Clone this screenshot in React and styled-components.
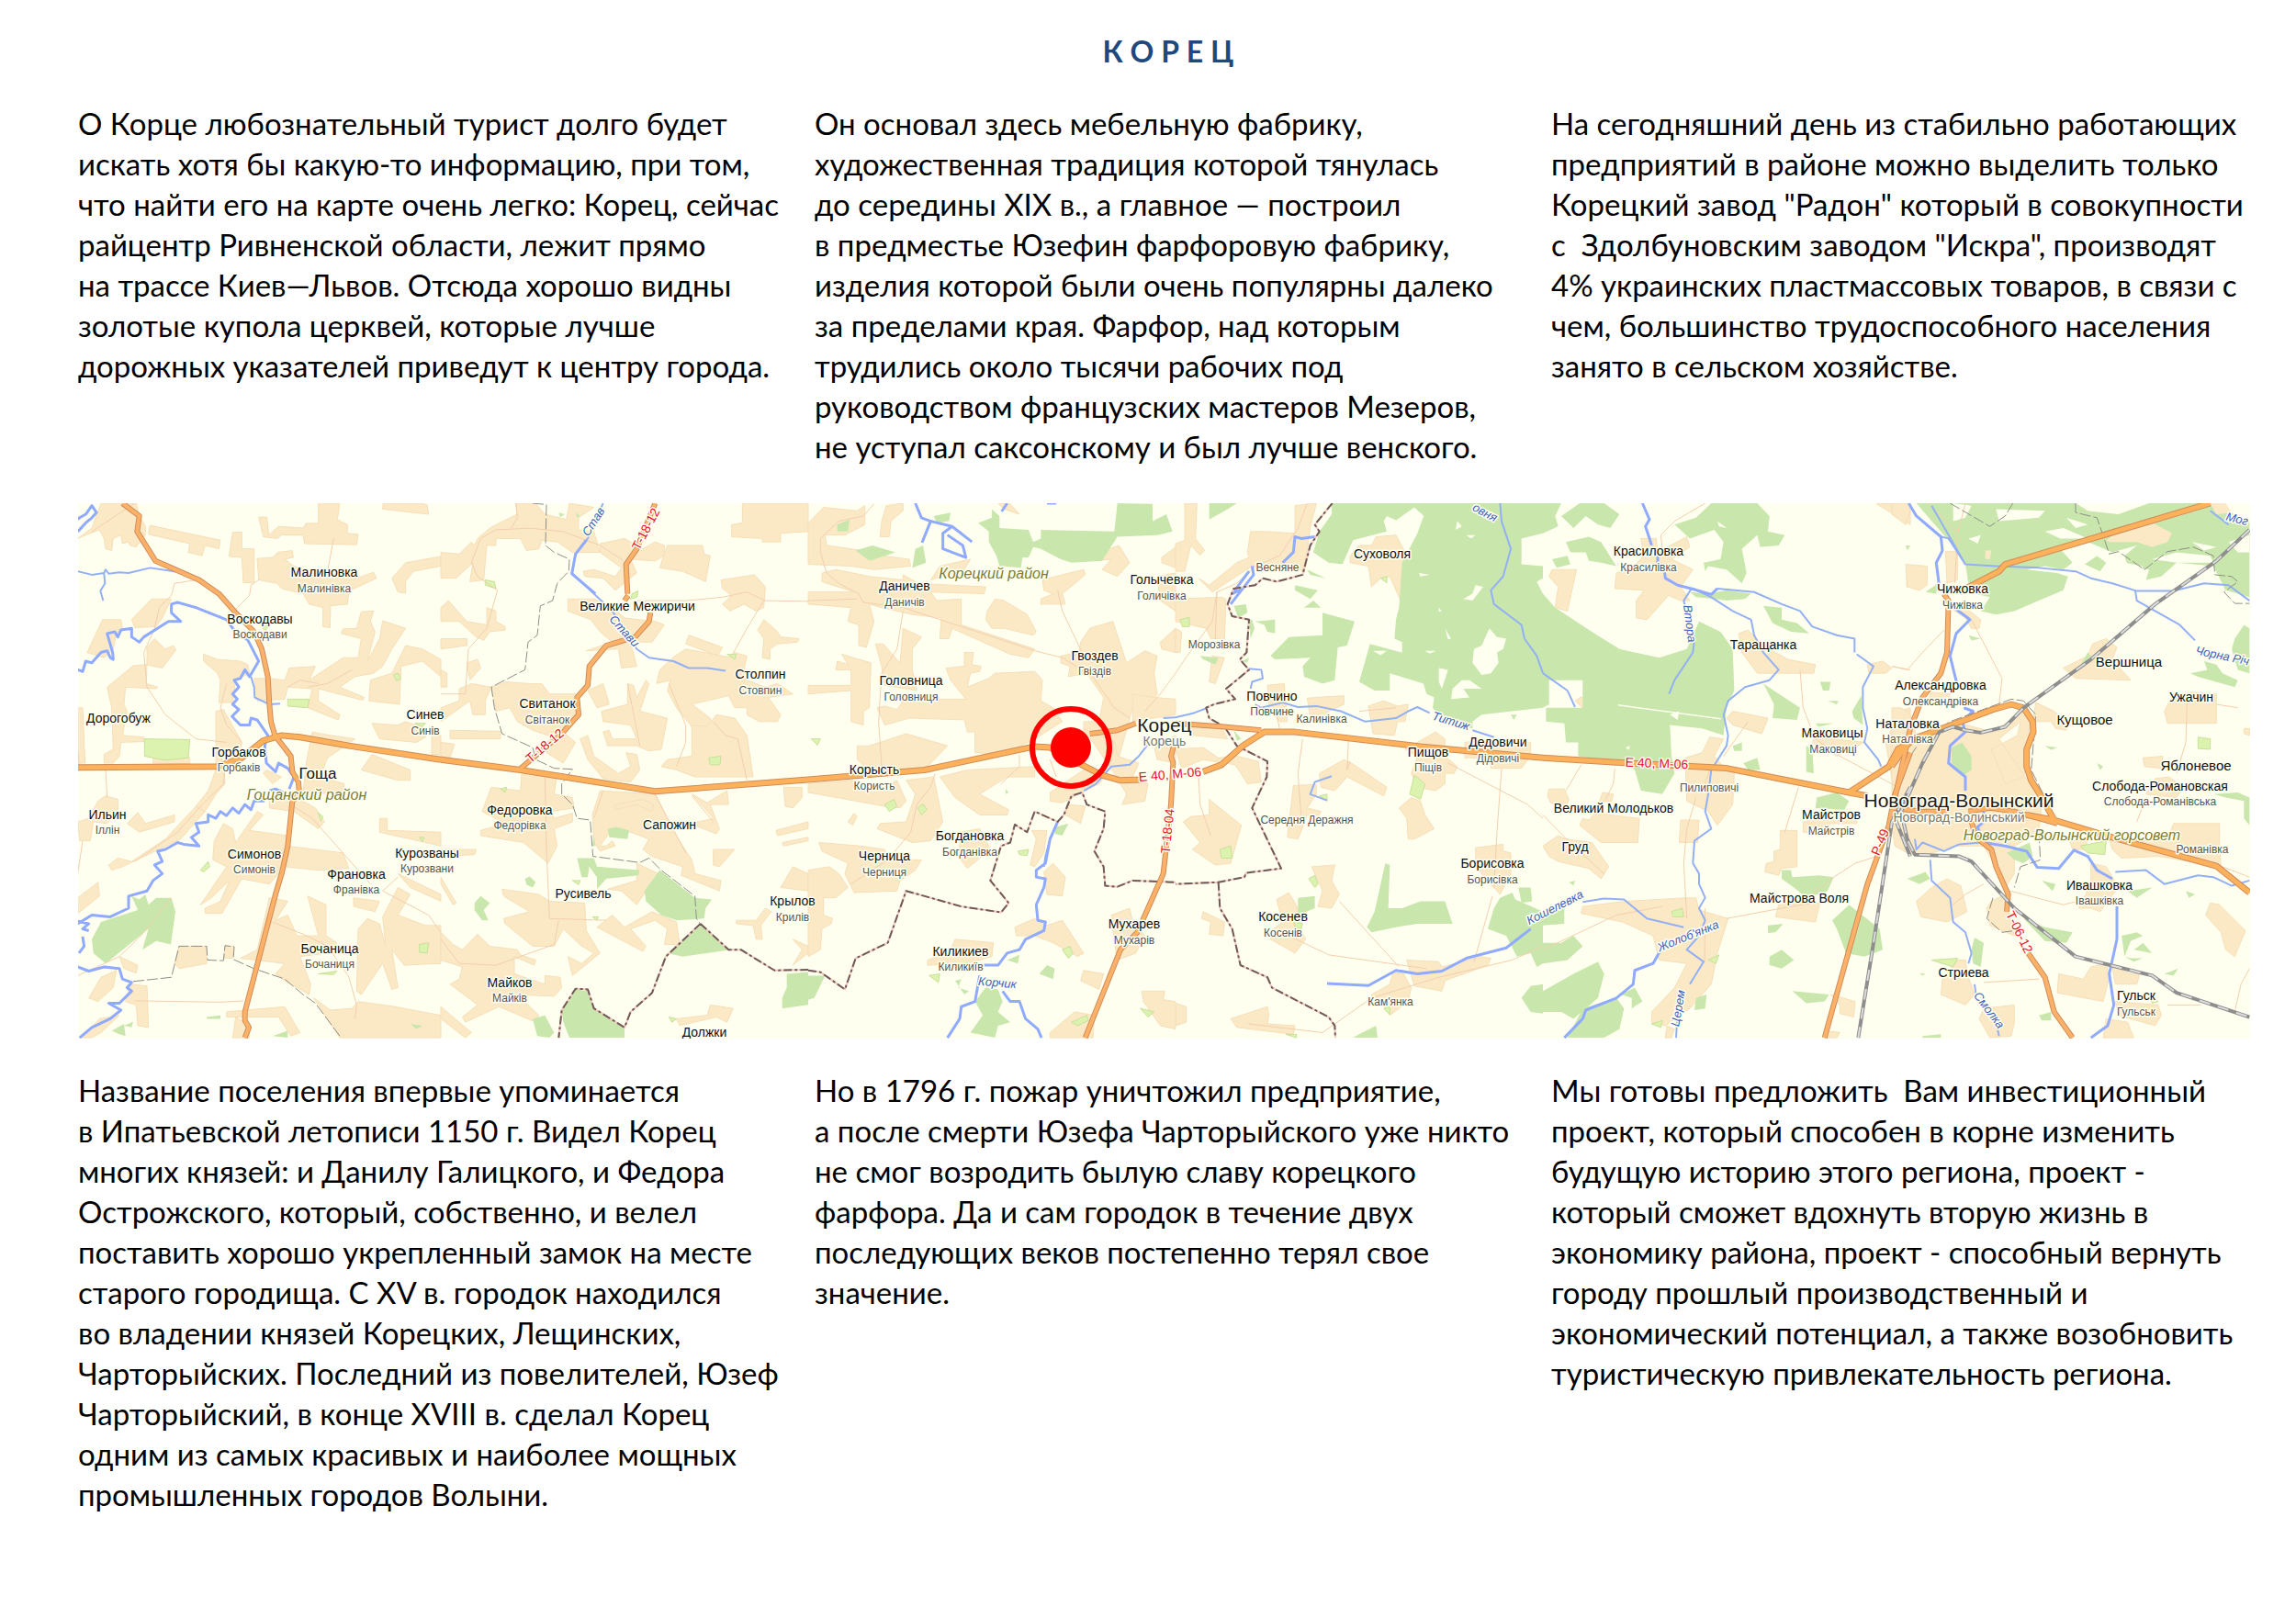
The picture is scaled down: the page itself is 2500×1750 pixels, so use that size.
import React from "react";
import styled, { createGlobalStyle } from "styled-components";

const GlobalStyle = createGlobalStyle`
  body { margin: 0; background: #fff; }
`;

const Page = styled.main`
  box-sizing: border-box;
  padding: 34px 29px 60px 85px;
  font-family: Lato, "Open Sans", sans-serif;
  color: #000;
`;

const Title = styled.h1`
  margin: 0 0 34px;
  padding-right: 12px;
  text-align: center;
  font-size: 32px;
  line-height: 44px;
  font-weight: 700;
  color: #1f497d;
`;

const Columns = styled.section`
  display: grid;
  grid-template-columns: repeat(3, minmax(0, 1fr));
  column-gap: 20px;
`;

const Paragraph = styled.p`
  margin: 0;
  font-size: 33px;
  line-height: 44px;
  white-space: pre-wrap;
`;

const MapFigure = styled.figure`
  margin: 40px 21px 34px 0;
`;

const MapDrawing = styled.svg`
  display: block;
  width: 100%;
  height: auto;
  background: #fffff0;
`;

const Shape = styled.path`
  vector-effect: non-scaling-stroke;
  stroke-linejoin: round;
  fill: ${(p) => p.$fill || "none"};
  stroke: ${(p) => p.$stroke || "none"};
  stroke-width: ${(p) => p.$width || 1}px;
  stroke-dasharray: ${(p) => p.$dash || "none"};
`;

const labelKinds = {
  town: { size: 14, color: "#111" },
  local: { size: 12, color: "#555" },
  place: { size: 17, color: "#111" },
  city: { size: 21, color: "#1c1c1c" },
  village: { size: 15, color: "#111" },
  cityLocal: { size: 14, color: "#777" },
  district: { size: 16, color: "#7d7d35", italic: true },
  river: { size: 13, color: "#3f60bb", italic: true },
  route: { size: 14, color: "#e3142a" },
};

const Label = styled.text`
  font-family: "Liberation Sans", Arial, sans-serif;
  font-size: ${(p) => labelKinds[p.$kind].size}px;
  font-style: ${(p) => (labelKinds[p.$kind].italic ? "italic" : "normal")};
  fill: ${(p) => labelKinds[p.$kind].color};
  stroke: #fffff0;
  stroke-width: 3px;
  stroke-linejoin: round;
  paint-order: stroke;
  text-anchor: middle;
  dominant-baseline: central;
`;

/* The map is stored as six sheets laid side by side, each in its own units. */
const sheets = [
  {
    x: 80,
    fields:
      "M14,110 60,80 90,8 205,8 215,45 235,75 235,100 205,135 185,130 180,120 160,125 155,100 130,110 125,145 105,140 100,110 85,85 40,100z M250,72 480,115 475,140 430,130 420,160 375,150 380,125 245,98z M520,92 550,92 550,140 590,140 590,238 555,238 550,165 508,162z M605,48 632,48 638,100 670,75 750,80 760,66 800,66 800,8 870,8 862,55 895,70 895,95 930,98 925,128 755,125 750,100 680,100 665,110 620,105z M1012,8 1130,8 1155,12 1160,40 1010,25z M600,168 650,165 668,150 715,145 718,165 690,170 720,190 780,205 925,225 980,208 990,225 900,262 895,300 840,305 838,368 815,365 815,310 770,300 750,270 680,255 665,240 605,230z M1040,225 1085,180 1200,162 1200,190 1110,205 1085,235 1085,268 1060,265z M95,345 155,345 160,370 140,385 130,430 100,455 45,440z M190,345 255,285 320,285 290,340 270,365 200,368z M240,425 265,400 300,430 325,420 335,432 290,485 240,475z M425,445 470,460 545,465 570,475 575,500 530,520 520,585 475,585 480,520 470,500 425,465z M110,540 145,515 195,478 240,475 238,530 275,540 270,545 170,540 165,590 175,610 160,680 230,685 230,698 155,700 150,740 130,760 100,760 100,735 130,720 125,600z M14,600 30,600 38,760 14,760z M260,740 350,735 380,745 380,762 260,760z",
    fields2:
      "M590,515 640,515 690,520 705,485 790,480 770,520 880,455 930,455 940,400 875,385 880,372 925,370 940,322 980,320 970,350 985,380 960,465 1000,400 1010,348 1085,370 1040,430 1010,480 980,500 920,510 870,540 950,570 945,578 800,545 800,580 870,620 865,635 765,600 780,545 700,540 690,575 600,580z M970,520 1040,500 1085,420 1140,430 1200,460 1200,510 1140,465 1070,480 1065,590 965,580z M975,645 1060,650 1085,640 1150,660 1150,685 1120,700 1000,690z M465,610 490,605 550,700 545,720 480,740 490,760 495,820 465,850 430,900 400,885 440,840 465,780z M780,670 840,680 920,690 830,745 805,800 885,820 880,845 750,850 760,760z M975,735 1100,780 1100,810 1060,810 940,780z M1170,680 1200,680 1200,735 1170,735z M80,870 105,855 145,865 145,895 110,935 65,930 55,985 20,985 14,930 50,920z M175,935 210,903 235,935 330,910 330,930 215,960z M145,1035 190,1045 300,980 400,885 430,900 350,980 160,1060 125,1070 115,1055z M460,985 490,935 520,950 530,990 600,900 620,910 575,955 700,970 700,1000 880,1020 900,1065 800,1070 690,1060 640,1110 550,1095 485,1195 430,1195 430,1180 480,1160 510,1100 450,1150 415,1170 500,1060 455,1040z M600,1300 640,1150 700,1160 660,1215 700,1200 730,1260 800,1260 765,1145 825,1170 825,1260 860,1280 830,1310 740,1320 775,1400 770,1430 690,1390 660,1370 690,1340 545,1325z M630,780 680,800 650,820 620,790z M640,860 710,850 790,890 820,930 800,950 720,900 640,890z M1000,920 1025,920 1025,955 1200,960 1200,1000 1000,960z M1060,1080 1200,1140 1200,1160 1100,1120z M915,1150 1000,1160 985,1190 915,1175z M1010,1205 1060,1120 1100,1140 1060,1200 1150,1230 1200,1230 1200,1340 1080,1345 1040,1300 1060,1410 1040,1415 1010,1340 940,1430 925,1420 930,1240 960,1210 1000,1225 1020,1290z M345,1290 435,1290 435,1340 345,1355 330,1340z M495,1290 525,1290 520,1325 490,1325z M185,1400 240,1405 245,1525 210,1520 205,1460 170,1450z M150,1320 210,1345 205,1368 165,1355z M50,1440 90,1380 140,1360 130,1410 80,1450z M500,1480 690,1465 740,1540 710,1550 670,1495 500,1495z M785,1440 840,1475 910,1470 930,1450 1050,1465 1200,1490 1200,1555 870,1555z M14,1150 80,1105 85,1145 14,1195z M25,1555 85,1500 150,1490 90,1540 60,1555z M530,1495 575,1520 575,1555 520,1555z",
    woods:
      "M190,1145 215,1155 235,1140 245,1170 270,1150 320,1150 333,1190 318,1285 270,1275 225,1300 245,1240 105,1340 65,1310 60,1270 90,1220 210,1185z M125,1535 165,1515 170,1550 150,1545z M165,1520 195,1508 190,1525z M435,1495 480,1490 480,1500 435,1500z M1100,1515 1140,1520 1120,1530z M650,1550 700,1535 700,1555z",
    meadows:
      "M232,690 380,692 375,745 300,752 232,740z M700,575 770,575 765,600 700,595z M1045,505 1060,500 1070,515 1055,522z M415,1070 440,1045 445,1060 425,1075z M1130,1285 1160,1280 1155,1310 1130,1308z M800,905 815,915 808,928z M800,1370 860,1362 850,1372z M615,365 640,360 625,378z M1115,645 1150,645 1140,655z M1130,975 1145,975 1140,988z",
    lanes:
      "M400,230 330,240 320,275 280,310 265,370 230,440 240,540 300,620 400,690 500,700 M480,600 500,650 550,700 M530,315 575,275 580,245 605,230 M850,110 830,205 M20,770 14,720 M105,780 110,860 M320,1150 220,1260 150,1320 14,1375 M60,90 200,8 M30,985 14,1080 M495,770 490,820 410,890 340,960 200,1045 M710,880 780,920 970,1110 M650,1220 750,1255 830,1290 900,1380 925,1460 920,1500 M200,1448 480,1452 555,1448 M1060,1090 1010,1130 1160,1200 1200,1250 M765,540 830,530 910,490 M700,540 740,520 800,530 M500,530 480,600",
    streams:
      "M14,205 60,215 100,210 105,200 115,212 150,208 180,210 250,195 330,205 400,225 M100,212 103,240 88,262 97,290 M580,510 590,540 592,570 640,590 675,588",
    rivers:
      "M14,90 40,65 60,50 75,35 60,15 40,40 20,50 14,55 M14,490 30,495 40,465 60,470 90,440 110,435 120,455 130,460 128,440 110,385 135,380 145,395 155,375 190,370 190,395 215,410 230,395 310,350 350,350 320,325 320,300 340,295 400,310 500,345 520,370 570,405 605,465 575,510 560,490 545,515 525,520 540,540 520,560 535,575 520,590 540,605 518,625 545,650 575,650 580,630 600,635 635,680 625,710 630,760 660,785 670,760 700,775 720,800 705,835 M640,840 660,835 700,850 M625,870 590,870 580,895 560,880 540,905 520,890 500,912 480,900 465,920 440,910 440,930 400,935 410,960 385,975 410,1000 360,995 340,990 300,1010 275,1015 290,1045 265,1055 290,1080 260,1100 240,1130 180,1145 180,1180 120,1205 60,1200 14,1225 M14,1218 50,1225 30,1240 50,1245 M30,1262 35,1290 18,1310 M14,1350 50,1362 100,1350 150,1355 160,1385 190,1395 175,1410 190,1420 150,1455 115,1455 155,1475 120,1500 60,1525 20,1555",
    roads: [
      "M160,8 215,45 208,90 268,175 410,230 475,270 530,325 590,380 615,430 635,510 640,590 645,640 658,680 710,740 715,785 735,815 738,850 715,870 700,1000 680,1080 660,1140 610,1310 560,1480 560,1505 573,1525 560,1555",
    ],
    highways: ["M14,773 470,770 550,745 620,695 680,680 740,685 900,710 1200,750"],
    borders: "M195,1392 320,1380 345,1290 435,1290 438,1330 490,1332 495,1288 525,1292 522,1328 590,1355 690,1385 750,1430 790,1455 870,1550",
  },
  {
    x: 480,
    fields:
      "M0,150 60,155 100,120 110,130 120,110 160,80 185,68 250,40 245,8 310,8 340,40 410,55 420,8 500,20 450,50 450,85 500,90 520,150 430,150 380,120 330,115 320,140 280,145 260,110 180,110 180,130 150,130 140,230 95,235 105,180 50,225 0,225z M465,205 500,200 570,220 590,195 520,150 520,125 600,110 660,140 700,120 730,130 730,160 700,175 620,170 640,210 570,260 530,225 470,220z M740,130 775,130 855,130 860,155 880,160 865,235 790,205 715,195z M950,70 985,65 985,8 1200,8 1200,90 1110,95 1110,120 1050,120 1050,110 950,105z M915,230 1025,215 1060,250 1055,310 1030,320 990,300 945,320 920,300 950,275 920,255z M1055,345 1100,380 1110,395 1170,400 1165,410 1100,415 1075,430 1075,460 1050,455 1055,400 1035,375z M415,285 500,285 560,310 600,340 700,350 730,360 690,410 620,410 640,480 590,485 580,430 475,435 560,410 520,380 490,345 415,320z M810,390 920,425 905,450 800,415z M765,450 800,430 950,455 960,440 1000,450 990,490 1000,520 1060,540 1100,530 1150,560 1070,570 1110,620 1100,640 1040,640 1000,620 1000,600 960,600 940,565 820,590 880,630 885,650 820,655 770,600 740,550 750,520 705,530 715,490z",
    fields2:
      "M165,540 215,525 290,530 330,530 355,560 440,560 450,620 410,650 350,680 300,665 250,640 225,600 180,610z M480,550 530,530 550,590 510,600z M525,610 610,590 610,530 630,535 640,570 670,520 680,530 650,610 740,630 720,720 680,725 640,710 545,710 530,670 550,665 560,690 640,690 620,650 530,640z M820,650 870,655 900,620 960,630 1000,680 1020,800 830,800 770,780 720,770 740,750 820,740z M400,670 440,700 400,760 345,730 360,700z M455,690 480,680 500,740 580,790 620,770 605,730 640,735 650,780 620,815 530,805 480,750z M0,600 60,580 60,545 100,530 165,540 145,580 145,620 105,620 95,580 0,640z M0,490 20,500 20,540 0,540z M30,665 195,668 195,690 30,690z M0,310 25,290 85,350 150,360 150,310 180,320 180,350 210,365 210,375 160,380 140,405 115,395 60,350 0,350z M0,400 85,400 85,420 0,430z M85,470 120,460 130,485 95,520z M0,700 45,705 30,745 0,740z M265,780 380,790 370,850 430,860 435,890 360,900 370,920 430,905 430,930 370,950 380,1000 350,1050 270,990 130,970 130,955 170,945 240,960 200,930 135,900 165,830 260,840z M520,840 700,850 760,960 790,1000 820,1040 830,1080 915,1100 910,1130 785,1085 790,1060 690,1030 660,1010 680,980 620,960 560,950 520,1000 540,1000 560,985 570,1000 520,1015 500,990 495,910z M570,880 660,865 695,880 690,900 640,880 570,895z M820,850 870,875 935,840 940,880 880,880 910,950 900,965 815,935 890,920z M1120,830 1180,830 1180,860 1150,890 1125,885z M1095,955 1200,930 1200,950 1100,970z M1115,990 1200,975 1200,985 1120,1000z M890,1010 960,1010 910,1060 890,1055z M0,1010 115,1010 110,1025 0,1030z M0,1090 50,1165 40,1170 0,1110z M640,1050 710,1080 640,1170 590,1130 545,1125 640,1100z M200,1125 320,1140 355,1160 470,1165 475,1245 520,1310 430,1375 415,1320 460,1340 500,1310 460,1290 400,1240 370,1290 300,1290 210,1225 205,1210 290,1190 205,1145z M510,1235 560,1200 600,1235 690,1190 770,1220 780,1285 730,1285 740,1240 700,1215 620,1240 670,1290 660,1305z M965,1215 1030,1215 1060,1180 1080,1190 1045,1230 1050,1270 1030,1270 1020,1230 965,1225z M1110,1120 1150,1060 1200,1080 1200,1130z M0,1250 40,1285 70,1300 120,1255 160,1290 250,1300 260,1315 310,1330 305,1345 240,1320 240,1370 340,1400 340,1375 390,1380 395,1410 370,1435 250,1430 320,1490 310,1510 190,1465 80,1510 70,1495 120,1460 30,1400 60,1385 70,1350 0,1330z M770,1500 870,1490 880,1460 955,1470 935,1510 900,1495 780,1520z M1150,1270 1200,1290 1200,1310 1150,1345 1180,1300z M0,1465 100,1540 80,1555 0,1500z",
    woods:
      "M445,1035 500,1035 510,1060 650,1070 645,1085 540,1095 510,1125 510,1090 485,1060 480,1090 460,1090z M545,950 575,945 615,955 610,980 550,975z M715,1070 830,1150 885,1155 865,1180 860,1210 770,1215 720,1200 670,1160 665,1130z M850,1230 900,1270 945,1300 870,1310 790,1320 740,1310 800,1265z M395,1480 440,1415 485,1420 500,1470 600,1525 600,1555 420,1555 400,1510z M1130,1370 1200,1365 1200,1460 1115,1470 1115,1440 1130,1410z M275,1095 290,1088 310,1105 300,1120 280,1112z M110,1165 130,1145 160,1165 140,1185 155,1215 135,1215 110,1185z M300,1500 340,1490 370,1540 355,1555 315,1550z M500,970 505,1000 495,1000z M385,35 405,40 390,48z M440,35 455,45 445,50z",
    meadows:
      "M145,230 175,235 180,255 145,245z M625,270 645,262 640,280 620,285z M935,445 965,445 960,460z M875,745 915,740 912,765 880,765z M430,1100 455,1100 450,1112z M195,835 215,830 210,845z M495,1205 515,1205 510,1215z M745,1495 770,1500 755,1510z",
    lanes:
      "M0,560 80,560 90,430 150,370 185,260 120,220 100,180 130,110 180,85 290,80 400,90 520,130 590,170 610,190 M245,8 250,50 230,80 M640,290 800,290 920,280 1000,265 1060,290 1200,292 M1055,290 1000,370 950,450 M745,530 800,650 800,700 770,770 M340,800 345,1010 355,1210 540,1215 M385,1215 370,1285 180,1345 60,1340 0,1270 M890,640 930,680 970,690 1000,810 M610,530 650,710 M700,850 800,1020 M500,920 530,840 M820,855 890,930",
    streams:
      "M530,8 480,110 440,155 428,210 500,270 560,320 640,430 680,455 760,465 810,485 870,485 930,493",
    rivers: "M475,115 440,155 428,212 505,270",
    roads: [
      "M700,8 640,140 605,185 610,270 M600,290 612,275",
      "M685,325 680,350 635,395 540,420 485,480 480,535 445,570 450,620 400,670 255,780",
    ],
    highways: ["M0,750 260,780 700,842 1200,808"],
    borders:
      "M300,8 345,12 342,130 370,150 420,170 418,205 380,240 365,290 325,305 315,390 285,410 275,490 165,540 175,600 200,675 300,715 310,750 370,775 430,778 395,820 395,850 430,880 445,920 488,925 497,1030 650,1048 680,1035 720,1070 830,1145 835,1210 848,1225",
    oblast: "M848,1225 735,1320 690,1425 620,1480 600,1525 500,1470 480,1415 440,1413 395,1475 385,1555 M848,1225 940,1300 980,1300 1090,1360 1200,1358",
  },
  {
    x: 880,
    fields:
      "M0,65 50,20 160,30 185,15 185,70 120,100 55,100 60,130 180,145 245,160 330,170 335,190 215,200 140,190 0,185z M255,15 310,8 310,30 270,60 265,105 235,105 240,60z M45,210 90,200 200,220 310,230 310,215 360,240 580,250 575,270 400,265 420,290 500,285 500,360 740,430 720,455 660,445 470,370 460,400 430,400 435,340 340,330 240,310 200,300 215,350 190,425 165,420 165,360 130,350 140,310 0,300 0,265 150,265 45,235z M585,320 610,285 640,290 715,330 745,380 735,390 640,370 600,370 580,345z M765,230 830,215 900,200 905,215 830,270 840,300 760,300 760,285 800,270 770,260z M950,150 1015,130 1050,180 1010,220 960,200 990,170 940,175z M1155,165 1200,135 1200,195 1155,180z M430,190 530,170 510,200 400,230z M620,8 660,10 690,40 640,25z M825,450 885,440 890,410 920,370 995,350 1040,470 1100,435 1140,450 1130,500 1140,560 1110,600 1060,600 1010,760 1000,790 990,690 900,680 900,640 950,640 965,570 910,500 850,510 855,480 825,470z M1140,220 1200,210 1200,320 1150,290z M1150,410 1200,370 1200,440 1155,430z M0,535 140,535 140,490 90,490 95,465 130,475 110,445 205,470 200,600 180,610 180,650 140,640 140,550 0,560z M220,415 245,415 300,470 310,370 370,395 340,430 340,490 355,550 250,535 240,480z M450,485 510,480 510,440 540,440 535,475 565,480 560,495 530,500 520,540 590,515 610,500 740,495 765,520 760,580 800,600 830,640 740,690 640,735 545,730 545,670 520,670 510,635 330,630 250,650 225,600 250,595 290,605 310,580 400,575 515,575 465,520z",
    fields2:
      "M160,710 200,710 320,675 455,710 390,770 340,790 210,790 160,750z M0,820 140,810 250,830 290,810 320,870 300,890 250,885 0,845z M320,810 410,800 440,930 400,985 340,990 225,950 235,935 320,930 350,850z M430,800 520,780 740,770 740,800 650,800 560,850 655,895 650,910 560,910 480,860z M790,845 900,780 975,790 950,820 830,875 790,870z M850,880 905,885 890,935 840,910z M900,660 1000,700 1010,740 1080,760 1060,800 1110,820 1100,870 1025,880 1040,850 1000,790z M1060,560 1130,570 1200,575 1200,620 1060,640z M35,990 170,1000 250,1010 260,1040 370,1040 350,1070 300,1100 290,1130 150,1135 120,1080 130,1050 45,1015z M130,930 150,905 160,915 145,940z M500,960 560,950 595,1010 520,1065 490,1030z M730,955 780,955 770,1020 740,1060 725,1055 745,980z M770,1075 800,1050 840,1090 830,1145 780,1140z M0,1070 70,1060 100,1080 130,1120 90,1150 50,1150 50,1200 80,1210 75,1225 45,1240 40,1300 0,1320z M675,1235 740,1210 780,1230 830,1215 900,1310 880,1320 800,1280 740,1260 680,1260z M390,1330 460,1310 480,1270 605,1280 600,1320 520,1340 390,1345z M990,1200 1050,1180 1060,1220 1100,1260 1070,1310 1010,1330 1000,1280z M890,1390 900,1360 965,1370 950,1415z M1090,1420 1165,1420 1160,1445 1200,1450 1200,1530 1150,1520 1095,1450z M790,1540 870,1480 935,1490 930,1555 790,1555z M1130,710 1200,680 1200,760 1140,750z",
    woods:
      "M555,65 600,50 600,25 625,45 625,80 720,85 735,120 760,110 760,85 1000,90 1010,8 1125,10 1125,60 1170,40 1190,90 1140,100 1010,105 960,175 860,180 825,170 760,140 735,135 720,165 700,165 695,195 625,190 615,160 590,120 590,90z M155,145 210,130 285,150 235,165 200,175z M410,45 465,35 460,60 420,65z M95,70 135,55 130,90 95,90z M350,140 375,130 385,180 340,195z M545,1450 580,1410 620,1415 635,1450 620,1480 660,1510 620,1520 610,1555 530,1540 570,1490z M755,1370 780,1345 805,1355 800,1385z M650,1330 690,1315 685,1340z M0,1375 55,1375 20,1440 0,1445z M480,1390 500,1385 490,1410 525,1420 510,1430z M810,945 850,935 830,970 805,965z M645,835 655,845 645,850z",
    meadows:
      "M250,880 280,865 290,885 265,900z M358,890 375,878 388,895 370,910z M685,1015 720,1010 715,1028 690,1025z M830,1300 855,1290 865,1310 850,1325z M395,1375 430,1370 425,1395z M1085,1470 1130,1480 1110,1495z M860,1510 910,1490 915,1505 880,1520z M10,690 40,690 30,708z",
    lanes:
      "M215,10 180,45 100,60 40,110 40,150 60,210 100,240 165,270 180,295 310,310 500,365 740,435 830,455 930,510 1000,600 1050,630 M815,260 830,320 900,450 M310,320 290,430 240,500 230,640 240,770 M415,790 400,830 355,880 335,960 260,1040 140,1110 M690,735 690,770 630,820 M790,750 810,800 M1200,500 1150,560 1100,610 M0,290 160,285",
    streams:
      "M1200,628 1160,630 M1115,700 1080,740 1050,765 990,770 940,820 900,840 M815,930 790,980 775,1030 770,1060",
    rivers:
      "M350,8 370,50 400,60 372,122 M400,60 470,75 535,120 M470,75 440,95 440,140 515,165 505,130 455,100 M650,8 632,32 M815,930 790,980 775,1050 745,1070 745,1090 775,1095 770,1120 745,1170 750,1215 775,1220 770,1245 710,1270 690,1300 650,1310 620,1345 575,1345 M780,8 810,8 M560,1375 545,1450 500,1465 495,1500 455,1555 M635,1420 660,1450 690,1450 710,1500 750,1530 762,1555",
    roads: [
      "M1200,690 1185,740 1192,760 1185,880 1160,1080 1120,1160 1075,1250 1020,1300 905,1555",
      "M920,675 1010,665 1070,645",
    ],
    highways: ["M0,808 380,780 740,712 790,715 850,745 960,795 1020,810 1090,808"],
    oblast:
      "M0,1360 40,1365 120,1415 155,1325 260,1280 320,1130 500,1175 630,1192 655,1165 595,1100 630,1000 660,990 675,938 715,960 740,900 815,930 835,910 860,855 895,845 910,880 970,900 965,950 935,1015 965,1060 970,1115 1010,1118 1060,1100 1200,1105",
  },
  {
    x: 1280,
    fields:
      "M30,8 70,8 65,110 95,145 80,158 50,130 30,205 0,205 0,125 30,115z M390,15 460,8 440,80 420,210 380,180 250,190 120,265 75,225 110,245 200,180 240,165 235,150 245,90 300,90 390,95z M0,285 150,280 165,285 160,400 115,400 100,370 0,350z M120,450 160,455 130,530 110,525z M0,370 20,380 15,440 0,440z M570,160 600,130 640,130 655,105 720,100 750,150 745,190 735,230 745,270 735,290 700,220 670,225 640,250 630,190 570,180z M300,535 355,530 365,640 340,640 305,600z M430,572 550,565 550,590 500,610 490,635 440,630z M630,595 680,580 725,595 760,590 750,640 725,640 715,680 645,675z M50,650 150,655 170,690 60,680z M0,720 90,715 140,745 200,740 270,755 280,815 235,820 195,765 90,750 20,775z M470,790 550,750 575,760 690,830 680,855 560,800 520,840 475,830z M385,825 460,822 460,850 430,890 475,900 470,910 430,910 400,980 365,975z M750,720 850,670 880,690 880,740 920,770 910,790 880,790 880,820 850,840 790,830 770,790 790,740z M730,890 770,860 800,870 815,910 845,950 780,980 760,980 755,920z M945,700 1050,690 1160,700 1160,740 1130,775 1030,775 1025,745 945,745z M110,865 215,940 180,1050 130,1055 55,1010 80,990 25,930 50,915 110,910z M445,1060 520,1055 510,1100 535,1140 510,1180 465,1175 480,1130z M330,1155 370,1135 400,1180 400,1230 425,1270 390,1310 310,1270 320,1240 350,1220z M90,1190 160,1220 155,1260 110,1255 115,1220 85,1210z M980,1005 1070,995 1070,1015 1095,1020 1095,1080 1060,1140 1020,1100 980,1060z M755,1330 860,1335 870,1350 1000,1320 1030,1325 1020,1345 880,1390 870,1420 780,1405z M640,1430 700,1400 710,1365 745,1370 770,1410 760,1450 700,1490 690,1470 640,1440z M180,1500 300,1465 305,1490 300,1515 390,1520 385,1545 200,1525z M0,1455 35,1465 35,1510 0,1520z",
    woods:
      "M510,8 1200,8 1200,600 1000,620 970,640 970,660 870,635 840,600 845,570 820,560 810,530 700,500 700,550 650,550 600,525 635,415 740,440 740,410 715,400 720,345 730,310 740,180 790,95 810,45 800,35 740,65 690,45 680,60 690,90 580,115 545,185 500,180 450,150 470,90 510,40z M480,325 585,350 560,420 530,425 520,520 480,530 420,510 415,480 440,455 325,460 310,450 370,395 480,390z M390,245 465,260 440,285 390,260z M420,310 450,290 475,310z M240,345 250,345 258,370 245,400z M260,350 325,345 325,385 300,380 290,360z M190,305 230,300 235,325 205,340z M685,1050 700,1055 695,1180 740,1180 800,1160 880,1160 905,1225 850,1225 790,1225 720,1235 640,1250 625,1235 650,1190z M400,1150 455,1145 455,1180 400,1200z M1060,1150 1100,1135 1110,1155 1200,1190 1200,1340 1180,1350 1160,1310 1115,1320 1080,1260 1020,1240 1040,1180z M1120,1120 1160,1120 1165,1160 1130,1165z M1200,1400 1160,1405 1130,1440 1160,1480 1200,1485z M580,1555 600,1545 655,1520 660,1555z M80,450 140,455 130,475 90,460z M110,8 200,8 170,25 110,55z M430,200 490,225 440,215z M190,665 215,690 200,695z M1095,620 1115,620 1105,635z M215,465 240,455 235,470z",
    clearings:
      "M1130,110 1200,95 1200,190 1130,185z M1025,370 1050,395 1080,400 1070,430 1050,440 1055,470 1030,500 1000,505 970,470 975,430 1000,420z M860,485 890,490 870,545 860,525z M905,545 935,520 960,520 1000,545 940,545 960,570 900,575z M780,20 810,45 750,90 700,70z M940,285 970,270 980,245 1005,250 970,290z M795,210 830,215 800,220z M645,435 690,435 670,448z M815,435 850,435 830,443z M860,310 870,320 860,322z M950,100 980,100 965,110z M920,60 935,75 915,85z M880,370 900,400 890,402z M1180,235 1200,225 1200,270z",
    meadows:
      "M15,345 45,338 45,365 22,365z M145,1010 180,1000 185,1035 150,1035z M765,850 780,795 815,820 800,865z M435,1095 455,1085 465,1110 455,1120z M670,225 690,220 690,238z M470,855 495,850 495,870z M680,1470 700,1465 700,1488z M385,1215 415,1225 410,1240 390,1235z M360,1545 395,1545 395,1555z",
    lanes:
      "M430,8 400,80 340,160 260,190 200,240 135,265 120,350 30,460 0,500 M135,265 130,400 M75,800 80,880 115,970 M415,690 400,790 410,910 M565,695 560,780 M890,760 1150,880 1200,920 M1065,775 1050,960 1040,1120 M1035,1145 975,1335 M535,1160 730,1350 M370,1260 500,1315 820,1355 M240,1515 480,1540 520,1515 640,1440 860,1380 1100,1330 1200,1290 M560,780 570,755 M325,600 340,660 M600,610 720,600",
    streams:
      "M245,545 250,525 285,515 280,490 240,487 M260,590 280,600 350,585 400,598 460,595 540,610 620,640 720,630 760,610 790,598 830,615 M970,665 1040,685 M510,798 455,815 440,850 495,868 M1060,8 1065,60 1095,140 1070,220 1030,260 1040,300 1130,360 1140,400 1180,450 1200,500 M0,628 60,615 105,600",
    rivers:
      "M455,105 410,110 390,105 385,150 350,180 M250,190 255,215 215,260 180,300 M240,205 185,270 220,255 M495,1398 630,1404 720,1360 790,1370 870,1362 950,1325 1080,1295 1160,1240",
    roads: ["M0,645 160,655 280,665"],
    highways: ["M90,785 150,765 220,710 290,670 390,670 800,712 1200,745"],
    oblast:
      "M512,8 455,70 470,90 440,130 415,215 330,235 285,225 260,245 190,255 170,300 185,335 240,345 232,440 210,460 240,490 165,545 195,575 125,590 100,600 110,630 160,655 200,710 300,755 298,800 250,890 345,1065 230,1078 225,1090 140,1105 0,1110 M140,1105 145,1180 185,1240 212,1345 300,1380 315,1410 500,1495 520,1520 522,1555",
  },
  {
    x: 1680,
    fields:
      "M320,110 370,110 375,150 470,105 480,135 420,170 490,200 450,250 480,290 450,290 410,275 340,345 305,340 305,290 330,260 235,255 240,210 290,195 330,160z M30,200 110,200 80,320 40,310 50,250 20,220z M640,385 670,375 720,420 800,460 890,475 885,500 700,500 650,440z M1060,475 1110,465 1140,485 1120,500 1065,500z M105,580 125,568 155,595 130,600z M620,610 735,630 715,675 620,650 600,630z M545,685 590,690 560,740 590,770 625,790 620,880 570,940 540,900 470,870 465,745 520,730z M450,925 510,925 505,990 445,990z M20,835 70,835 85,865 75,890 25,875 15,855z M195,845 230,850 225,870 185,870z M130,920 150,925 170,905 315,920 310,990 190,990 120,940z M0,1000 50,970 75,980 160,990 215,1060 190,1095 150,1065 50,1045 20,1030z M775,955 830,955 830,1060 780,1065 770,1085 725,1075 730,1050 755,1045 755,1015 775,1010z M850,930 910,920 960,895 1030,910 1025,935 940,935 900,965 850,960z M885,690 950,690 1050,700 960,740 880,700z M1090,10 1200,8 1200,70z M1190,190 1200,190 1200,250 1188,250z M130,1175 270,1160 470,1150 500,1150 510,1185 605,1210 570,1310 550,1400 480,1470 400,1520 355,1510 355,1480 430,1410 470,1340 380,1330 360,1260 260,1220 125,1195z M770,1170 905,1165 890,1220 760,1205z M940,1430 1020,1450 1015,1495 970,1485 970,1460z M930,1535 970,1540 960,1555 920,1555z M405,1520 430,1530 420,1555 400,1555z M1160,610 1200,600 1200,780 1150,860 1120,700z",
    woods:
      "M0,270 40,310 160,380 250,430 380,455 470,430 510,350 580,380 620,430 625,550 600,600 590,680 520,660 415,650 420,740 430,790 390,850 320,840 300,780 270,760 115,740 115,700 75,700 70,645 10,640 10,600 130,600 130,520 20,520 20,590 0,600z M0,8 60,8 40,45 50,75 0,95z M60,45 120,8 200,8 250,40 220,80 180,70 140,45 100,80z M75,120 150,105 190,120 240,190 190,180 150,175 140,150 90,150z M30,170 80,160 90,185 45,195z M430,70 500,50 550,8 700,8 740,45 735,90 790,100 770,130 710,135 700,100 650,140 665,210 650,240 600,200 540,190 530,205 525,180 580,170 590,120 560,85 480,110z M720,305 780,310 780,345 830,355 870,385 810,380 750,355z M480,265 540,270 600,260 680,270 660,285 600,290 560,285 500,280z M720,530 840,600 830,635 750,630 755,590z M905,525 940,525 935,550 915,550z M930,580 965,580 960,590z M1010,610 1040,565 1045,650 1015,630z M890,645 950,645 900,655z M655,760 700,745 710,780 670,780z M620,710 650,700 650,725 625,725z M860,710 880,720 885,790 860,785z M895,860 960,845 1000,870 985,895 890,890z M780,1070 810,1070 815,1090 900,1085 950,1090 930,1130 860,1150 820,1120 780,1095z M945,1215 1000,1170 1100,1240 1110,1300 1050,1320 990,1310 960,1240z M740,1320 780,1300 820,1330 780,1355 740,1345z M735,1230 785,1225 760,1250 735,1252z M815,1420 935,1430 920,1450 860,1455z M0,1280 60,1280 100,1260 130,1290 80,1330 0,1340z M0,1420 100,1370 180,1335 200,1370 180,1440 100,1500 60,1480 0,1480z M80,1555 130,1470 240,1440 265,1470 250,1530 200,1555z M255,1430 300,1410 325,1450 290,1470 290,1440z M0,1190 70,1180 70,1225 0,1230z M500,1440 535,1430 530,1470 495,1475z M85,1105 105,1100 100,1115z",
    clearings: "M415,620 445,610 440,635z M245,590 580,630 582,634 245,594z M270,715 285,710 280,722z M570,60 600,80 575,75z",
    meadows:
      "M420,1190 455,1180 460,1205 425,1205z M540,1330 575,1315 565,1340z M355,1515 390,1505 385,1525z",
    lanes:
      "M530,8 430,60 385,100 390,140 M670,640 590,740 M125,765 75,840 M235,775 230,820 205,865 M500,860 470,950 460,1050 470,1210 M840,490 850,600 890,690 960,735 1150,825 M835,830 790,960 M0,910 100,1000 200,1080 M1090,1030 1020,1050 950,1090 880,1140 M0,1300 240,1200 390,1175 M600,1210 780,1180 880,1165 M530,1180 528,1340 M1140,480 1200,490 M520,840 545,780",
    streams:
      "M485,255 460,290 470,330 495,400 490,440 430,520 412,560 M490,255 550,280 620,320 680,345 690,390 720,440 770,490 740,520 660,540 605,580 590,620 605,680 600,710 550,780 540,850 530,900 550,950 495,985 490,1050 510,1080 510,1110 530,1150 510,1180 530,1215 510,1260 470,1300 525,1335 480,1400 M440,1480 435,1555 M570,255 690,265 780,300 840,320 880,365 960,390 1018,400 1018,440 M1025,445 1080,480 1045,540 1045,600 1060,660 1050,700 1095,750 1105,770 M0,500 80,550 105,598 M130,1162 200,1152 265,1155 340,1210 460,1235",
    rivers: "M325,8 348,55 335,75 350,115 355,130 M375,160 375,180 395,190 400,225 440,245 485,255 550,272 570,255 M385,1300 360,1340 300,1360 295,1400 240,1440 140,1475 130,1500 70,1555",
    rails: "M1030,1555 1080,1280 1140,930 1200,830 M1150,920 1200,1030",
    highways: ["M0,745 240,758 600,775 1000,845 1060,855", "M1000,845 1130,770 1160,720 1200,700"],
    roads: ["M1200,730 1150,850 1130,940 1060,1110 920,1555"],
  },
  {
    x: 2060,
    fields:
      "M0,8 55,8 60,30 45,70 0,40z M45,185 115,190 115,245 90,260 50,250z M175,148 215,148 215,230 180,240z M560,485 640,450 655,415 700,400 735,425 720,460 780,520 600,515z M470,585 530,610 570,640 570,665 535,660 520,640 460,640z M890,610 910,575 980,555 1060,560 1060,645 900,645z M820,745 885,740 880,775 825,770z M860,805 905,800 950,830 930,860 830,850z M920,935 1070,935 1070,985 1075,1060 870,1030 750,1035 720,1010 710,980 900,985z M650,1050 700,1060 740,1120 680,1190 650,1180 610,1180 650,1110z M1040,1165 1070,1170 1155,1245 1120,1320 1090,1300 1075,1250 1025,1200z M80,1160 130,1120 180,1095 225,1115 245,1190 180,1220 95,1205z M325,1160 370,1140 400,1260 320,1230 310,1180z M160,1430 165,1385 215,1330 240,1330 250,1380 270,1430 240,1460z M300,1470 400,1460 400,1510 390,1550 320,1555 285,1500z M545,1370 625,1385 650,1350 700,1340 710,1380 690,1450 540,1425z M720,1350 780,1370 810,1370 800,1400 730,1400z M730,1450 870,1460 880,1490 860,1520 740,1490z M700,1500 770,1510 790,1555 690,1555z M180,305 240,310 290,345 285,370 260,370 240,340z M0,600 30,600 60,620 80,680 200,640 330,670 430,610 450,640 440,760 430,800 370,820 325,720 410,680 420,640 350,690 490,870 480,960 400,1000 400,1080 370,1120 340,1060 300,1000 200,1000 100,1030 50,1020 10,1000 0,950z M1150,660 1168,660 1168,680 1150,675z M130,555 190,560 180,590 110,590z M580,985 640,980 630,1010 590,1010z",
    woods:
      "M80,8 600,8 640,30 740,40 840,8 1040,8 1168,60 1168,280 1090,260 1050,190 930,180 880,220 830,230 840,200 770,190 760,160 800,130 720,150 640,120 540,130 590,180 560,200 500,190 440,200 540,210 575,220 560,260 480,290 400,320 340,330 290,320 320,280 270,270 250,240 240,185 200,130 160,90 130,60z M630,185 670,160 700,180 680,205z M1120,400 1150,360 1168,370 1168,500 1130,490 1110,430z M975,500 1030,490 1020,465 1060,475 1080,500 1130,520 1120,540 1080,530 1000,510z M195,715 230,700 260,740 260,780 235,795 195,760z M375,1020 450,990 460,1030 430,1050 400,1040z M50,1095 110,1075 125,1095 90,1110z M430,1210 500,1235 590,1250 570,1280 500,1275z M490,1100 535,1110 525,1130z M750,1260 800,1250 820,1260 780,1275 760,1320z M790,1300 820,1280 850,1310z M760,1320 790,1335 820,1325 780,1325z M260,1300 270,1265 300,1280 290,1350 265,1340z M480,1490 520,1480 520,1505 490,1505z M1050,850 1130,845 1168,860 1168,940 1150,920 1150,870 1090,860z M100,1550 160,1545 160,1555 100,1555z M500,710 540,715 520,722z M670,760 690,770 680,780z M770,1130 850,1120 800,1150z M960,1130 990,1140 970,1150z M250,390 290,400 260,405z M90,1368 110,1370 100,1375z M890,1370 935,1355 920,1375z M600,500 640,440 650,450 610,490z M110,265 150,240 145,270z M45,130 60,130 50,145z",
    clearings:
      "M200,8 260,15 240,50 200,60z M340,25 500,30 480,50 350,60z M500,90 560,80 640,110 550,110z M760,180 820,190 800,220 700,160z M850,170 930,150 1040,160 1050,180 930,180z M570,50 640,70 600,80z M250,110 290,100 280,125z M980,120 1060,135 1020,145z M1100,120 1168,100 1168,150 1130,150z M930,200 1050,200 1050,240 950,235z",
    glades:
      "M700,115 780,65 830,55 915,95 900,120 850,135 800,120 710,120z M305,145 325,145 320,170 305,168z M1040,8 1090,8 1110,35 1060,40z",
    meadows: "M615,1000 700,985 695,1025 640,1020z M1000,685 1040,690 1040,720 1000,718z M840,1440 870,1450 850,1455z M130,1330 215,1325 200,1350z",
    lanes:
      "M120,8 215,95 240,8 M215,95 205,240 M170,375 100,440 50,490 0,480 M260,345 360,515 350,590 M300,1110 240,1140 200,1170 M385,1130 560,1170 650,1150 M965,560 960,700 930,790 M830,860 800,930 M1168,1355 1140,1400 1120,1480 1168,1495 M300,1395 480,1385 M0,760 40,720 M900,1460 1010,1460 M1050,1050 1168,1090 M1060,590 1130,600",
    streams:
      "M130,15 240,185 340,190 480,195 600,205 650,225 720,240 800,262 920,262 1020,240 1100,245 1168,290 M160,105 185,110 240,185 M795,262 800,290 860,320 940,360 990,405 M1040,30 1100,70 M125,1040 130,1100 190,1150 200,1220 240,1250 260,1310 250,1340 M270,1400 275,1430 M340,1510 350,1550 M75,980 80,1010 100,990 170,1015 220,995 290,990 M730,1075 830,1070 890,1110 1000,1085 1050,1090 1110,1115 1168,1100",
    rivers:
      "M55,8 80,45 160,105 165,145 145,180 155,250 M195,305 255,345 210,385 190,450 215,540 M235,600 265,610 230,640 240,670 190,710 185,760 240,800 240,840 M300,900 300,930 280,945 300,990 370,1000 440,1015 475,1062 545,1065 595,1012 640,1030 670,1070 720,1095 M735,1175 735,1270 710,1370 725,1460 705,1520 650,1555",
    roads: [
      "M170,270 185,290 180,440 160,500 100,570 60,660 10,860",
      "M250,900 320,890 400,900 540,935",
      "M260,930 275,975 325,1010 340,1060 380,1140 375,1190 M445,1310 500,1380 530,1480 590,1555",
      "M0,890 100,900 180,900",
      "M0,770 40,720",
    ],
    highways: [
      "M1040,8 370,185 350,205 220,265",
      "M0,750 70,690 240,635 330,605 390,590 430,600 460,640 462,670 440,720 440,770 455,810 490,860 530,925",
      "M440,910 530,925 720,975 1060,1058 1168,1135",
    ],
    rails:
      "M1168,85 1060,175 860,300 650,460 430,600 370,655 290,672 240,665 200,655 155,670 100,760 30,900 50,980 75,1025 220,1030 260,1045 400,1180 600,1320 850,1375 930,1425 1168,1495",
    borders:
      "M190,8 320,75 370,45 395,8 M600,8 600,35 670,50 710,155 740,148 825,200 900,148 985,135 1050,160 1055,215 1110,220 1130,235 1085,265 1120,298 1168,298 M60,740 90,700 190,640 390,575 430,580 470,620 455,780 500,860 M480,960 485,1040 420,1060 400,1120 M330,1150 310,1210 360,1250 400,1245",
  },
];

const SHEET_TOP = 545;
const H = 1 / 3;
const V = 590 / 1568;

/* sheet, x, y, text, kind, angle */
const labels = [
  [0, 820, 208, "Малиновка", "town"], [0, 820, 254, "Малинівка", "local"],
  [0, 608, 342, "Воскодавы", "town"], [0, 608, 388, "Воскодави", "local"],
  [0, 148, 630, "Дорогобуж", "town"],
  [0, 541, 727, "Горбаков", "town"], [0, 541, 773, "Горбаків", "local"],
  [0, 797, 788, "Гоща", "place"], [0, 763, 850, "Гощанский район", "district"],
  [0, 112, 908, "Ильин", "town"], [0, 112, 954, "Іллін", "local"],
  [0, 590, 1022, "Симонов", "town"], [0, 590, 1069, "Симонів", "local"],
  [0, 925, 1081, "Франовка", "town"], [0, 925, 1128, "Франівка", "local"],
  [0, 838, 1297, "Бочаница", "town"], [0, 838, 1343, "Бочаниця", "local"],
  [0, 1148, 620, "Синев", "town"], [0, 1148, 667, "Синів", "local"],
  [0, 1155, 1020, "Курозваны", "town"], [0, 1155, 1066, "Курозвани", "local"],
  [1, 643, 305, "Великие Межиричи", "town"],
  [1, 1043, 503, "Столпин", "town"], [1, 1043, 550, "Стовпин", "local"],
  [1, 348, 588, "Свитанок", "town"], [1, 348, 635, "Світанок", "local"],
  [1, 259, 896, "Федоровка", "town"], [1, 259, 942, "Федорівка", "local"],
  [1, 746, 939, "Сапожин", "town"], [1, 464, 1138, "Русивель", "town"],
  [1, 224, 1394, "Майков", "town"], [1, 224, 1441, "Майків", "local"],
  [1, 861, 1538, "Должки", "town"],
  [1, 1148, 1159, "Крылов", "town"], [1, 1148, 1206, "Крилів", "local"],
  [1, 498, 62, "Став", "river", -58], [1, 600, 378, "Стави", "river", 48],
  [1, 668, 82, "Т-18-12", "route", -62], [1, 338, 710, "Т-18-12", "route", -40],
  [2, 316, 248, "Даничев", "town"], [2, 316, 296, "Даничів", "local"],
  [2, 605, 211, "Корецкий район", "district"],
  [2, 337, 522, "Головница", "town"], [2, 337, 569, "Головниця", "local"],
  [2, 937, 448, "Гвоздев", "town"], [2, 937, 495, "Гвіздів", "local"],
  [2, 217, 780, "Корысть", "town"], [2, 217, 827, "Користь", "local"],
  [2, 527, 970, "Богдановка", "town"], [2, 527, 1018, "Богданівка", "local"],
  [2, 250, 1029, "Черница", "town"], [2, 250, 1076, "Черниця", "local"],
  [2, 497, 1304, "Киликиев", "town"], [2, 497, 1350, "Киликиїв", "local"],
  [2, 1066, 1225, "Мухарев", "town"], [2, 1066, 1272, "Мухарів", "local"],
  [2, 1155, 229, "Голычевка", "town"], [2, 1155, 276, "Голичівка", "local"],
  [2, 1165, 648, "Корец", "city"], [2, 1165, 697, "Корець", "cityLocal"],
  [2, 618, 1396, "Корчик", "river", 5],
  [2, 1183, 792, "Е 40, М-06", "route", -5], [2, 1172, 958, "Т-18-04", "route", -84],
  [3, 675, 154, "Суховоля", "town"], [3, 333, 193, "Весняне", "local"],
  [3, 125, 418, "Морозівка", "local"],
  [3, 314, 565, "Повчино", "town"], [3, 314, 612, "Повчине", "local"],
  [3, 477, 632, "Калинівка", "local"],
  [3, 825, 727, "Пищов", "town"], [3, 825, 774, "Піщів", "local"],
  [3, 1053, 700, "Дедовичи", "town"], [3, 1053, 747, "Дідовичі", "local"],
  [3, 430, 926, "Середня Деражня", "local"],
  [3, 1034, 1050, "Борисовка", "town"], [3, 1034, 1098, "Борисівка", "local"],
  [3, 352, 1205, "Косенев", "town"], [3, 352, 1252, "Косенів", "local"],
  [3, 703, 1451, "Кам'янка", "local"],
  [3, 900, 638, "Титиж", "river", 17], [3, 1010, 35, "овня", "river", 28],
  [3, 1240, 1178, "Кошелевка", "river", -27],
  [4, 345, 147, "Красиловка", "town"], [4, 345, 193, "Красилівка", "local"],
  [4, 719, 416, "Таращанка", "town"],
  [4, 946, 673, "Маковицы", "town"], [4, 948, 720, "Маковиці", "local"],
  [4, 543, 831, "Пилиповичі", "local"],
  [4, 231, 889, "Великий Молодьков", "town"], [4, 105, 1003, "Груд", "town"],
  [4, 941, 909, "Майстров", "town"], [4, 941, 956, "Майстрів", "local"],
  [4, 836, 1151, "Майстрова Воля", "town"],
  [4, 373, 761, "Е 40, М-06", "route", 2], [4, 1100, 988, "Р-49", "route", -68],
  [4, 480, 355, "Втора", "river", 83], [4, 475, 1260, "Жолоб'янка", "river", -22],
  [4, 442, 1470, "Церем", "river", -80],
  [5, 232, 256, "Чижовка", "town"], [5, 232, 302, "Чижівка", "local"],
  [5, 773, 464, "Вершница", "village"], [5, 629, 632, "Кущовое", "village"],
  [5, 978, 569, "Ужачин", "town"], [5, 994, 766, "Яблоневое", "village"],
  [5, 876, 826, "Слобода-Романовская", "town"], [5, 876, 872, "Слобода-Романівська", "local"],
  [5, 160, 535, "Александровка", "town"], [5, 160, 581, "Олександрівка", "local"],
  [5, 50, 646, "Наталовка", "town"], [5, 50, 692, "Наталівка", "local"],
  [5, 220, 866, "Новоград-Волынский", "city"], [5, 220, 917, "Новоград-Волинський", "cityLocal"],
  [5, 588, 968, "Новоград-Волынский горсовет", "district"],
  [5, 1015, 1011, "Романівка", "local"],
  [5, 679, 1113, "Ивашковка", "town"], [5, 679, 1160, "Івашківка", "local"],
  [5, 234, 1366, "Стриева", "town"],
  [5, 797, 1433, "Гульск", "town"], [5, 797, 1479, "Гульськ", "local"],
  [5, 418, 1248, "Т-06-12", "route", 64], [5, 318, 1475, "Смолка", "river", 53],
  [5, 1080, 450, "Чорна Річ", "river", 12], [5, 1128, 52, "Мог", "river", 14],
];

function Layer({ name, ...style }) {
  return sheets.map((s) =>
    [].concat(s[name] || []).map((d, i) => (
      <g key={s.x + "-" + i} transform={`translate(${s.x} ${SHEET_TOP}) scale(${H} ${V})`}>
        <Shape d={d} {...style} />
      </g>
    ))
  );
}

function RegionMap() {
  return (
    <MapDrawing viewBox="85 548 2365 583" role="img" aria-label="Карта: Корец">
      <Layer name="fields" $fill="#fbe9c6" $stroke="#f6dfb9" />
      <Layer name="fields2" $fill="#fbe9c6" $stroke="#f6dfb9" />
      <Layer name="woods" $fill="#c9e7ad" />
      <Layer name="clearings" $fill="#fffff0" />
      <Layer name="glades" $fill="#fbe9c6" />
      <Layer name="meadows" $fill="#dbf3ae" $stroke="#c9e09a" />
      <Layer name="lanes" $stroke="#f3cfae" $width={1} />
      <Layer name="streams" $stroke="#94b0f5" $width={2} />
      <Layer name="rivers" $stroke="#8faaff" $width={3} />
      <Layer name="borders" $stroke="#8f8f88" $width={1} $dash="12 3" />
      <Layer name="oblast" $stroke="#f3c8bc" $width={2} />
      <Layer name="oblast" $stroke="#6f5b58" $width={2} $dash="9 3 3 3" />
      <Layer name="roads" $stroke="#d18c5a" $width={6} />
      <Layer name="highways" $stroke="#d18c5a" $width={7} />
      <Layer name="roads" $stroke="#fbb268" $width={4} />
      <Layer name="highways" $stroke="#fdb15a" $width={5} />
      <Layer name="rails" $stroke="#8e8e8e" $width={4} />
      <Layer name="rails" $stroke="#dcdcdc" $width={2} $dash="12 9" />
      {labels.map(([sheet, x, y, text, kind, angle]) => {
        const px = Math.round(sheets[sheet].x + x * H);
        const py = Math.round(SHEET_TOP + y * V);
        return (
          <Label
            key={`${text}-${px}`}
            x={px}
            y={py}
            $kind={kind}
            transform={angle ? `rotate(${angle} ${px} ${py})` : undefined}
          >
            {text}
          </Label>
        );
      })}
      <circle cx="1166" cy="814" r="42" fill="none" stroke="#f00" strokeWidth="6" />
      <circle cx="1166" cy="814" r="22" fill="#f00" />
    </MapDrawing>
  );
}

const intro = [
  `О Корце любознательный турист долго будет
искать хотя бы какую-то информацию, при том,
что найти его на карте очень легко: Корец, сейчас
райцентр Ривненской области, лежит прямо
на трассе Киев—Львов. Отсюда хорошо видны
золотые купола церквей, которые лучше
дорожных указателей приведут к центру города.`,
  `Он основал здесь мебельную фабрику,
художественная традиция которой тянулась
до середины XIX в., а главное — построил
в предместье Юзефин фарфоровую фабрику,
изделия которой были очень популярны далеко
за пределами края. Фарфор, над которым
трудились около тысячи рабочих под
руководством французских мастеров Мезеров,
не уступал саксонскому и был лучше венского.`,
  `На сегодняшний день из стабильно работающих
предприятий в районе можно выделить только
Корецкий завод "Радон" который в совокупности
с  Здолбуновским заводом "Искра", производят
4% украинских пластмассовых товаров, в связи с
чем, большинство трудоспособного населения
занято в сельском хозяйстве.`,
];

const history = [
  `Название поселения впервые упоминается
в Ипатьевской летописи 1150 г. Видел Корец
многих князей: и Данилу Галицкого, и Федора
Острожского, который, собственно, и велел
поставить хорошо укрепленный замок на месте
старого городища. С XV в. городок находился
во владении князей Корецких, Лещинских,
Чарторыйских. Последний из повелителей, Юзеф
Чарторыйский, в конце XVIII в. сделал Корец
одним из самых красивых и наиболее мощных
промышленных городов Волыни.`,
  `Но в 1796 г. пожар уничтожил предприятие,
а после смерти Юзефа Чарторыйского уже никто
не смог возродить былую славу корецкого
фарфора. Да и сам городок в течение двух
последующих веков постепенно терял свое
значение.`,
  `Мы готовы предложить  Вам инвестиционный
проект, который способен в корне изменить
будущую историю этого региона, проект -
который сможет вдохнуть вторую жизнь в
экономику района, проект - способный вернуть
городу прошлый производственный и
экономический потенциал, а также возобновить
туристическую привлекательность региона.`,
];

export default function App() {
  return (
    <Page>
      <GlobalStyle />
      <Title>К О Р Е Ц</Title>
      <Columns>
        {intro.map((text) => (
          <Paragraph key={text}>{text}</Paragraph>
        ))}
      </Columns>
      <MapFigure>
        <RegionMap />
      </MapFigure>
      <Columns>
        {history.map((text) => (
          <Paragraph key={text}>{text}</Paragraph>
        ))}
      </Columns>
    </Page>
  );
}
